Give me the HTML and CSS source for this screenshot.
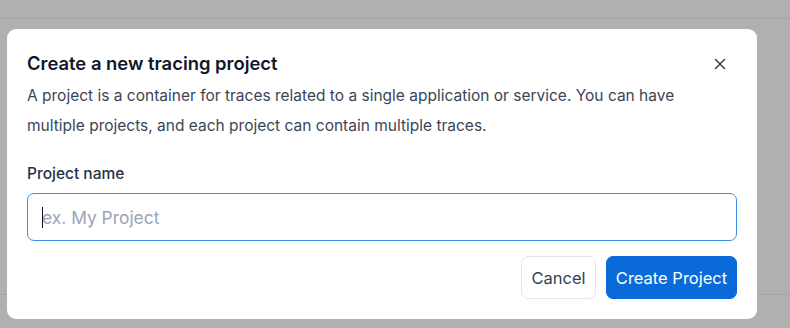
FILE: index.html
```html
<!DOCTYPE html>
<html lang="en">
<head>
<meta charset="utf-8">
<title>Create a new tracing project</title>
<link rel="stylesheet" href="styles.css">
</head>
<body>
<div class="page">
  <div class="page-top"></div>
  <div class="page-body"></div>
  <div class="page-foot"></div>
</div>
<div class="dialog" role="dialog" aria-labelledby="dlg-title">
  <div class="dialog-head">
    <h2 id="dlg-title" class="dialog-title">Create a new tracing project</h2>
    <button class="close" aria-label="Close">
      <svg width="12" height="12" viewBox="0 0 12 12" fill="none" stroke="#334155" stroke-width="1.5" stroke-linecap="round"><path d="M1.5 1.5l9 9M10.5 1.5l-9 9"/></svg>
    </button>
  </div>
  <p class="dialog-desc">A project is a container for traces related to a single application or service. You can have multiple projects, and each project can contain multiple traces.</p>
  <label class="field-label" for="pname">Project name</label>
  <div class="input-wrap">
    <span class="caret"></span>
    <input id="pname" class="field-input" type="text" placeholder="ex. My Project">
  </div>
  <div class="actions">
    <button class="btn btn-secondary">Cancel</button>
    <button class="btn btn-primary">Create Project</button>
  </div>
</div>
</body>
</html>
```
FILE: styles.css
```css
* { box-sizing: border-box; }
html, body { margin: 0; padding: 0; }
body {
  width: 790px;
  height: 328px;
  overflow: hidden;
  background: #b0b0b0;
  font-family: Inter, "Noto Sans", sans-serif;
  position: relative;
}
.page { display: flex; flex-direction: column; height: 328px; }
.page-top { height: 19px; border-bottom: 1px solid #a4a4a4; }
.page-body { height: 275px; }
.page-foot { border-top: 1px solid #a4a4a4; flex: 1; }

.dialog {
  position: absolute;
  left: 7px;
  top: 29px;
  width: 750px;
  height: 290px;
  background: #ffffff;
  border-radius: 9px;
  padding: 20px 20px 20px 20px;
  display: flex;
  flex-direction: column;
}
.dialog-head {
  display: flex;
  align-items: center;
  justify-content: space-between;
}
.dialog-title {
  margin: 0;
  font-size: 18.4px;
  line-height: 28px;
  font-weight: 600;
  color: #0f172a;
}
.close {
  border: 0;
  background: none;
  padding: 0;
  width: 20px;
  height: 20px;
  display: flex;
  align-items: center;
  justify-content: center;
  margin-right: 7px;
  margin-top: 2px;
  cursor: pointer;
}
.dialog-desc {
  margin: 4px 0 0;
  max-width: 680px;
  font-size: 15.5px;
  line-height: 30px;
  color: #3b4557;
}
.field-label {
  margin-top: 21px;
  font-size: 15.5px;
  line-height: 24px;
  font-weight: 500;
  color: #273244;
}
.input-wrap {
  position: relative;
  margin-top: 7px;
  height: 48px;
}
.field-input {
  width: 100%;
  height: 48px;
  border: 1px solid #3d8ee8;
  border-radius: 7px;
  padding: 0 14px;
  font-family: inherit;
  font-size: 17.4px;
  color: #0f172a;
  outline: none;
  background: #fff;
}
.field-input::placeholder { color: #9aa4b6; }
.caret {
  position: absolute;
  left: 15px;
  top: 14px;
  width: 1px;
  height: 21px;
  background: #111;
  z-index: 1;
}
.actions {
  margin-top: 15px;
  display: flex;
  justify-content: flex-end;
  gap: 10px;
}
.btn {
  height: 43px;
  border-radius: 7px;
  font-family: inherit;
  font-size: 16.5px;
  padding: 0;
  white-space: nowrap;
  cursor: pointer;
}
.btn-secondary {
  background: #fff;
  border: 1px solid #e4e7ee;
  color: #334155;
  width: 75px;
}
.btn-secondary:hover { background: #f8fafc; }
.btn-primary {
  background: #0a6bd8;
  border: 1px solid #0a6bd8;
  color: #fff;
  width: 131px;
}
```
